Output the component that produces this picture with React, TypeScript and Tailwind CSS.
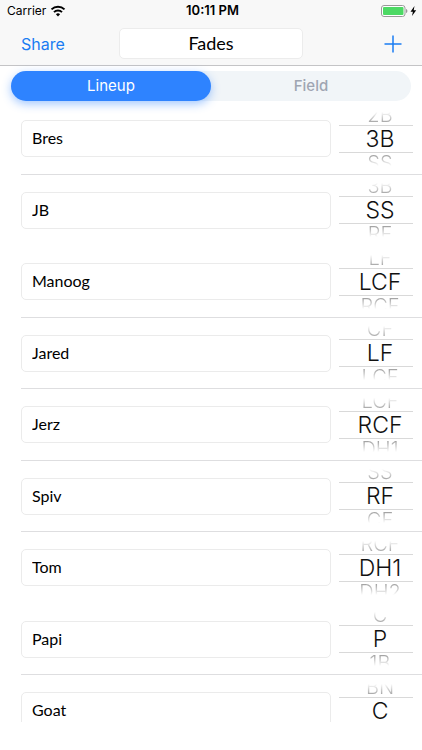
import { useState } from 'react'
import clsx from 'clsx'

type Player = {
  name: string
  position: string
  before: string
  after: string
  divider?: boolean
}

const positions = ['P', '1B', '2B', '3B', 'SS', 'RF', 'CF', 'LF', 'LCF', 'RCF', 'DH1', 'DH2', 'BN', 'C']

const lineup: Player[] = [
  { name: 'Bres', position: '3B', before: '2B', after: 'SS', divider: true },
  { name: 'JB', position: 'SS', before: '3B', after: 'RF' },
  { name: 'Manoog', position: 'LCF', before: 'LF', after: 'RCF', divider: true },
  { name: 'Jared', position: 'LF', before: 'CF', after: 'LCF', divider: true },
  { name: 'Jerz', position: 'RCF', before: 'LCF', after: 'DH1', divider: true },
  { name: 'Spiv', position: 'RF', before: 'SS', after: 'CF', divider: true },
  { name: 'Tom', position: 'DH1', before: 'RCF', after: 'DH2' },
  { name: 'Papi', position: 'P', before: 'C', after: '1B', divider: true },
  { name: 'Goat', position: 'C', before: 'BN', after: '', divider: true },
]

function WifiIcon() {
  return (
    <svg viewBox="0 0 16 12" className="h-3 w-4" fill="none" stroke="#000" strokeWidth="2" aria-hidden="true">
      <path d="M1.5 4.4a9.3 9.3 0 0 1 13 0" />
      <path d="M4 7.1a5.7 5.7 0 0 1 8 0" />
      <path d="M8 11.4 5.9 9.2a3 3 0 0 1 4.2 0Z" fill="#000" stroke="none" />
    </svg>
  )
}

function BatteryIcon() {
  return (
    <svg viewBox="0 0 37 12" className="h-3 w-[37px]" aria-hidden="true">
      <rect x="0.5" y="0.5" width="23.5" height="11" rx="2.5" fill="#fff" stroke="#999" />
      <rect x="2" y="2" width="20.5" height="8" rx="1" fill="#4cd964" />
      <path d="M25 4v4c1-.4 1.4-1.1 1.4-2S26 4.4 25 4Z" fill="#999" />
      <path d="M33.5 1 29.5 6.7h2.4L31 11l4.2-5.8h-2.5Z" fill="#000" />
    </svg>
  )
}

function StatusBar() {
  return (
    <div className="grid h-[22px] grid-cols-3 items-center pr-1 pl-[7px] text-xs text-black">
      <div className="flex items-center gap-1">
        <span>Carrier</span>
        <WifiIcon />
      </div>
      <span className="text-center text-[13px] font-semibold">10:11 PM</span>
      <div className="flex justify-end">
        <BatteryIcon />
      </div>
    </div>
  )
}

function NavBar() {
  return (
    <div className="grid h-[43px] grid-cols-[1fr_184px_1fr] items-center">
      <button type="button" className="justify-self-start pl-[21px] text-base text-[#1a7cf2]">Share</button>
      <input
        aria-label="Team name"
        defaultValue="Fades"
        className="h-[31px] w-full rounded-[5px] border border-[#ececec] bg-white pb-0.5 text-center font-['Lato',sans-serif] text-lg text-black outline-none"
      />
      <button type="button" aria-label="Add player" className="mr-5 justify-self-end text-[#1a7cf2]">
        <svg viewBox="0 0 18 18" className="h-[18px] w-[18px]" stroke="currentColor" strokeWidth="1.5" aria-hidden="true">
          <path d="M9 0.5v17M0.5 9h17" />
        </svg>
      </button>
    </div>
  )
}

function ViewSwitch() {
  const [active, setActive] = useState('Lineup')
  return (
    <div className="mx-[11px] mt-[5px] mb-0.5 flex h-[30px] shrink-0 rounded-full bg-[#f1f5f8]">
      {['Lineup', 'Field'].map((label) => (
        <button
          key={label}
          type="button"
          aria-pressed={active === label}
          onClick={() => setActive(label)}
          className={clsx(
            'flex-1 rounded-full text-[15px]',
            active === label
              ? 'bg-[#2e83ff] text-white shadow-[0_3px_10px_rgba(46,131,255,0.45)]'
              : 'font-medium text-[#9fa5b2]',
          )}
        >
          {label}
        </button>
      ))}
    </div>
  )
}

function PositionPicker({ player }: { player: Player }) {
  return (
    <div className="w-[74px] shrink-0 text-center">
      <div aria-hidden="true" className="h-5 bg-linear-to-t from-[#a0a0a0] from-10% to-transparent to-65% bg-clip-text pl-2 text-xl leading-5 font-light text-transparent">
        {player.before}
      </div>
      <select
        aria-label={`Position for ${player.name}`}
        defaultValue={player.position}
        className="block h-[28px] w-full appearance-none border-y border-[#d9d9d9] bg-transparent pl-2 text-center text-[23px] leading-[26px] font-light text-[#111] outline-none [text-align-last:center]"
      >
        {positions.map((position) => (
          <option key={position}>{position}</option>
        ))}
      </select>
      <div aria-hidden="true" className="h-5 bg-linear-to-b from-[#a0a0a0] from-10% to-transparent to-65% bg-clip-text pl-2 text-xl leading-5 font-light text-transparent">
        {player.after}
      </div>
    </div>
  )
}

function PlayerRow({ player }: { player: Player }) {
  return (
    <li className="relative flex h-[72px] shrink-0 items-center gap-2 pr-[9px] pb-px pl-[21px] even:h-[71px]">
      <input
        aria-label="Player name"
        defaultValue={player.name}
        className="h-[37px] min-w-0 flex-1 rounded-[5px] border border-[#ebebeb] bg-white px-[10px] pb-0.5 font-['Lato',sans-serif] text-base text-black outline-none"
      />
      <PositionPicker player={player} />
      {player.divider && <div className="absolute right-0 bottom-0 left-[21px] h-px bg-[#dedee0]" />}
    </li>
  )
}

export default function App() {
  return (
    <div className="flex h-screen flex-col bg-white pb-7 font-['Inter',sans-serif]">
      <header className="shrink-0 border-b border-[#c4c4c6] bg-[#f8f8f8]">
        <StatusBar />
        <NavBar />
      </header>
      <ViewSwitch />
      <ul className="flex min-h-0 flex-1 flex-col overflow-hidden">
        {lineup.map((player) => (
          <PlayerRow key={player.name} player={player} />
        ))}
      </ul>
    </div>
  )
}
